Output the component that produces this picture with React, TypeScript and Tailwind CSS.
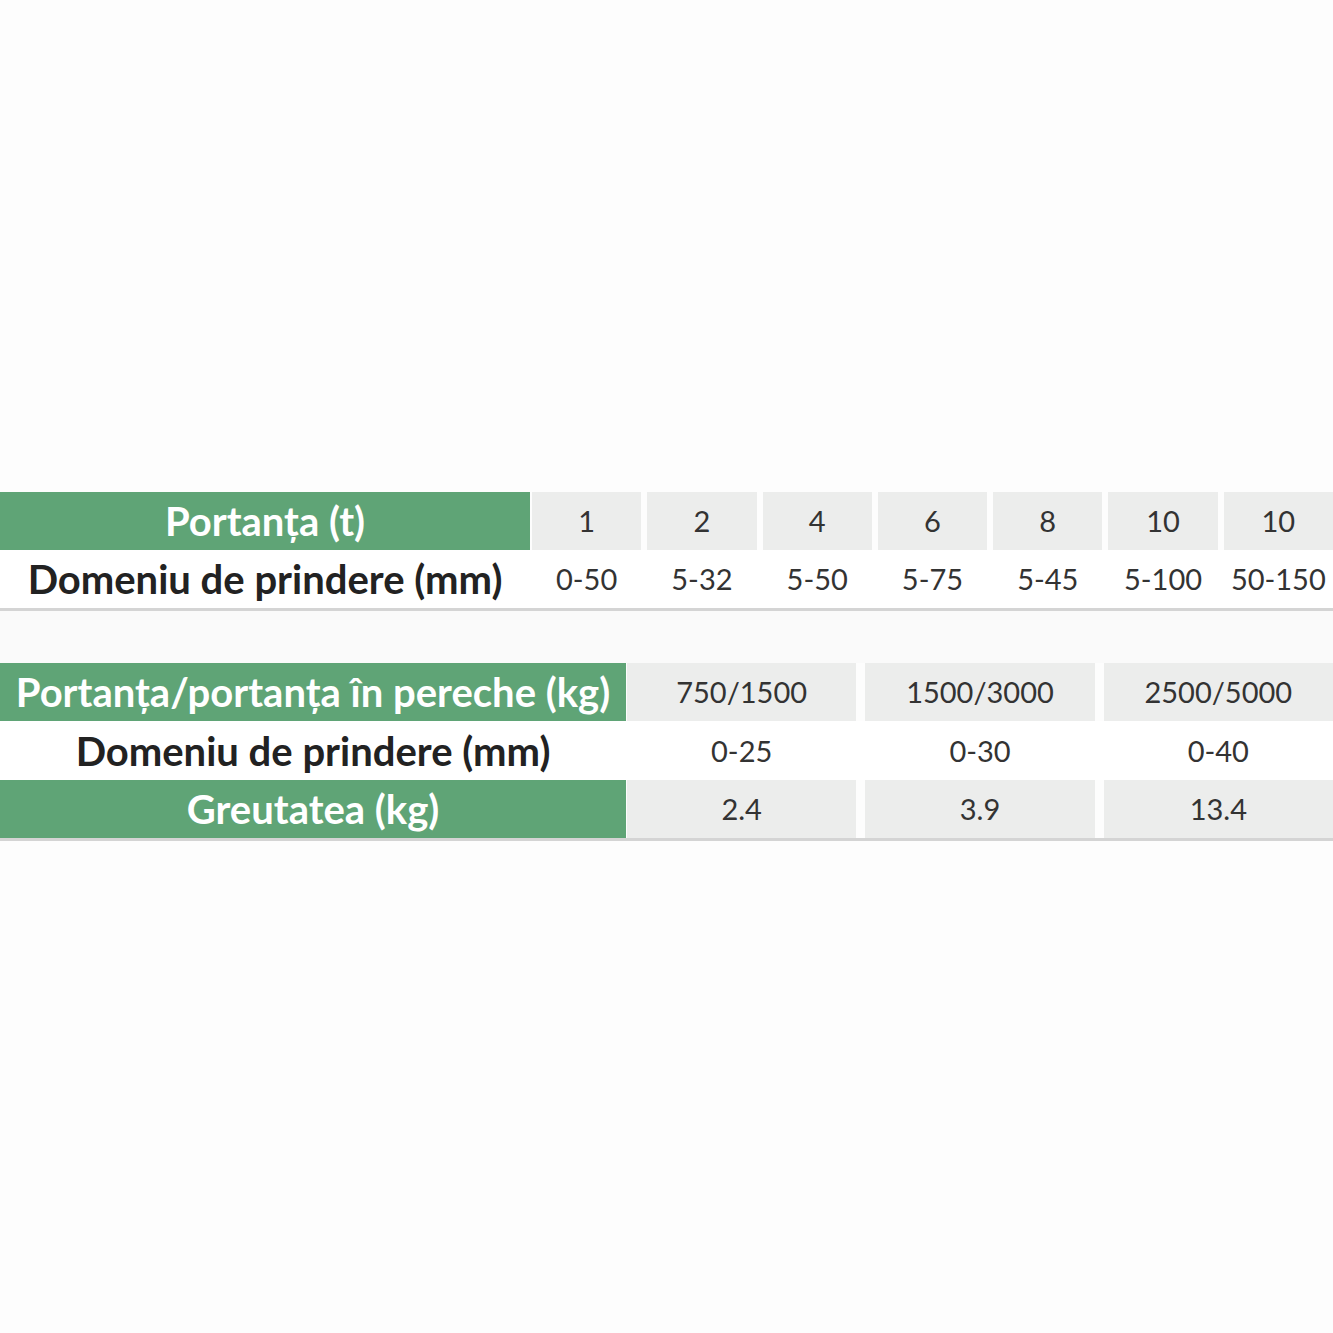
const font = { fontFamily: 'Lato, "Open Sans", sans-serif' };

const capacities = ['1', '2', '4', '6', '8', '10', '10'];
const ranges = ['0-50', '5-32', '5-50', '5-75', '5-45', '5-100', '50-150'];

const pairs = ['750/1500', '1500/3000', '2500/5000'];
const pairRanges = ['0-25', '0-30', '0-40'];
const weights = ['2.4', '3.9', '13.4'];

function GreenLabel({ text, width }: { text: string; width: string }) {
  return (
    <div className={`${width} h-full bg-[#5fa476] flex items-center justify-center text-white font-bold text-[40px] leading-none whitespace-nowrap`}>
      {text}
    </div>
  );
}

function DarkLabel({ text, width }: { text: string; width: string }) {
  return (
    <div className={`${width} h-full flex items-center justify-center text-[#222] font-bold text-[40px] leading-none whitespace-nowrap`}>
      {text}
    </div>
  );
}

export default function App() {
  return (
    <div className="w-[1333px] h-[1333px] bg-[#fdfdfd] flex flex-col" style={font}>
      <div className="h-[492px]" />

      {/* First table */}
      <div className="flex h-[58px]">
        <GreenLabel text="Portanța (t)" width="w-[530px]" />
        <div className="flex-1 flex gap-[6px] pl-[2px]">
          {capacities.map((c, i) => (
            <div key={i} className="flex-1 bg-[#ecedec] flex items-center justify-center text-[29px] text-[#333]">
              {c}
            </div>
          ))}
        </div>
      </div>
      <div className="flex h-[61px] bg-white border-b-[3px] border-[#d4d4d4]">
        <DarkLabel text="Domeniu de prindere (mm)" width="w-[530px]" />
        <div className="flex-1 flex gap-[6px] pl-[2px]">
          {ranges.map((r, i) => (
            <div key={i} className="flex-1 flex items-center justify-center text-[29px] text-[#333] whitespace-nowrap">
              {r}
            </div>
          ))}
        </div>
      </div>

      <div className="h-[52px] bg-[#fafafa]" />

      {/* Second table */}
      <div className="flex h-[58px]">
        <GreenLabel text="Portanța/portanța în pereche (kg)" width="w-[626px]" />
        <div className="flex-1 flex gap-[9px] pl-[1px]">
          {pairs.map((p, i) => (
            <div key={i} className="flex-1 bg-[#ecedec] flex items-center justify-center text-[29px] text-[#333]">
              {p}
            </div>
          ))}
        </div>
      </div>
      <div className="flex h-[59px] bg-white">
        <DarkLabel text="Domeniu de prindere (mm)" width="w-[626px]" />
        <div className="flex-1 flex gap-[9px] pl-[1px]">
          {pairRanges.map((r, i) => (
            <div key={i} className="flex-1 flex items-center justify-center text-[29px] text-[#333]">
              {r}
            </div>
          ))}
        </div>
      </div>
      <div className="flex h-[61px] border-b-[3px] border-[#d4d4d4]">
        <GreenLabel text="Greutatea (kg)" width="w-[626px]" />
        <div className="flex-1 flex gap-[9px] pl-[1px]">
          {weights.map((w, i) => (
            <div key={i} className="flex-1 bg-[#ecedec] flex items-center justify-center text-[29px] text-[#333]">
              {w}
            </div>
          ))}
        </div>
      </div>
    </div>
  );
}
